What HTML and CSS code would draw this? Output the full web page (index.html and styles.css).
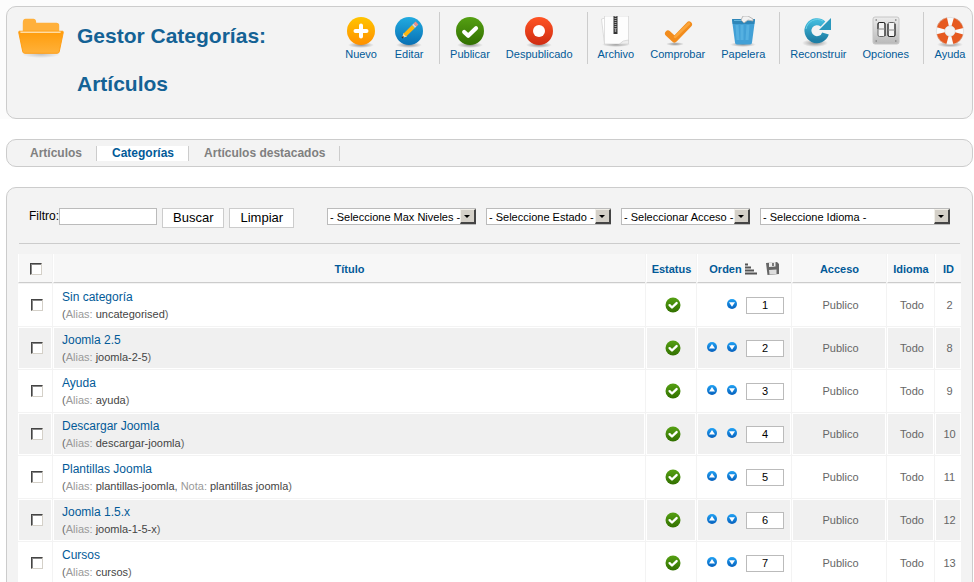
FILE: index.html
```
<!DOCTYPE html>
<html lang="es">

<head>
    <meta charset="UTF-8">
    <meta name="viewport" content="width=device-width, initial-scale=1.0">
    <title>Gestor Categorías: Artículos</title>
    <link rel="stylesheet" href="styles.css">
</head>

<body>

    <!-- shared icons and gradients -->
    <svg class="sprite" width="0" height="0" aria-hidden="true">
        <defs>
            <linearGradient id="gOrange" x1="0" y1="0" x2="0" y2="1">
                <stop offset="0" stop-color="#ffc400" />
                <stop offset="1" stop-color="#ff9000" />
            </linearGradient>
            <linearGradient id="gBlue" x1="0" y1="0" x2="0" y2="1">
                <stop offset="0" stop-color="#22abe0" />
                <stop offset="1" stop-color="#0870b4" />
            </linearGradient>
            <linearGradient id="gGreen" x1="0" y1="0" x2="0" y2="1">
                <stop offset="0" stop-color="#55a013" />
                <stop offset="1" stop-color="#327000" />
            </linearGradient>
            <linearGradient id="gRed" x1="0" y1="0" x2="0" y2="1">
                <stop offset="0" stop-color="#ff5424" />
                <stop offset="1" stop-color="#cf2c12" />
            </linearGradient>
            <linearGradient id="gFolder" x1="0" y1="0" x2="0" y2="1">
                <stop offset="0" stop-color="#ff9c0a" />
                <stop offset="1" stop-color="#ffb13a" />
            </linearGradient>
            <linearGradient id="gTeal" x1="0" y1="0" x2="0" y2="1">
                <stop offset="0" stop-color="#3fb8da" />
                <stop offset="1" stop-color="#1f7fa5" />
            </linearGradient>
            <linearGradient id="gMetal" x1="0" y1="0" x2="0" y2="1">
                <stop offset="0" stop-color="#ececec" />
                <stop offset="1" stop-color="#b9b9b9" />
            </linearGradient>
            <linearGradient id="gArrow" x1="0" y1="0" x2="0" y2="1">
                <stop offset="0" stop-color="#22a2f4" />
                <stop offset="1" stop-color="#0560bd" />
            </linearGradient>
            <radialGradient id="gShadow">
                <stop offset="0" stop-color="#000" stop-opacity=".4" />
                <stop offset="1" stop-color="#000" stop-opacity="0" />
            </radialGradient>
        </defs>
        <symbol id="tick" viewBox="0 0 16 16">
            <circle cx="8" cy="8" r="7.5" fill="url(#gGreen)" />
            <path d="M4.6 8.2l2.4 2.3 4.6-4.4" fill="none" stroke="#fff" stroke-width="2.4" stroke-linecap="round" stroke-linejoin="round" />
        </symbol>
        <symbol id="up" viewBox="0 0 10 10">
            <circle cx="5" cy="5" r="5" fill="url(#gArrow)" />
            <path d="M5 2L8 6.500H2z" fill="#fff" />
        </symbol>
        <symbol id="down" viewBox="0 0 10 10">
            <circle cx="5" cy="5" r="5" fill="url(#gArrow)" />
            <path d="M5 7.800L2 3.300h6z" fill="#fff" />
        </symbol>
    </svg>

    <div class="top">
        <header class="box header">
            <svg class="folder" width="46" height="46" viewBox="0 0 48 48" aria-hidden="true">
                <ellipse cx="24" cy="42" rx="20" ry="4" fill="url(#gShadow)" opacity=".5" />
                <path d="M5 20V9q0-4 3-4h8q3 0 3 4h21q3 0 3 3v8z" fill="#ffb03b" />
                <path d="M1.500 18h45q1 0 .7 1.500l-4.200 20q-.4 1.500-2 1.500H7q-1.600 0-2-1.500l-4.200-20Q.5 18 1.500 18z" fill="url(#gFolder)" stroke="#ff9c10" />
                <path d="M2.500 19h42" stroke="#ffdca2" stroke-width="1.500" />
            </svg>
            <h1>Gestor Categorías: Artículos</h1>
            <nav class="toolbar">
                <a href="#">
                    <svg viewBox="0 0 32 32">
                        <ellipse cx="16" cy="29" rx="13" ry="3" fill="url(#gShadow)" />
                        <circle cx="16" cy="15" r="14" fill="url(#gOrange)" />
                        <path d="M16 9.500v11M10.500 15h11" stroke="#fff" stroke-width="4" stroke-linecap="round" />
                    </svg>
                    Nuevo
                </a>
                <a href="#">
                    <svg viewBox="0 0 32 32">
                        <ellipse cx="16" cy="29" rx="13" ry="3" fill="url(#gShadow)" />
                        <circle cx="16" cy="15" r="14" fill="url(#gBlue)" />
                        <path d="M9 22l1.500-5 3.500 3.500z" fill="#f4d9a4" />
                        <path d="M11.800 19.200l8.700-8.700" stroke="#fbb60f" stroke-width="4" />
                        <path d="M20.500 10.500l1.500-1.500" stroke="#d5d5d5" stroke-width="4" />
                        <path d="M22 9l2-2" stroke="#ef8f86" stroke-width="4" />
                        <path d="M9 22l1.500-1.500" stroke="#333" stroke-width="1.500" />
                    </svg>
                    Editar
                </a>
                <span class="divider"></span>
                <a href="#">
                    <svg viewBox="0 0 32 32">
                        <ellipse cx="16" cy="29" rx="13" ry="3" fill="url(#gShadow)" />
                        <circle cx="16" cy="15" r="14" fill="url(#gGreen)" />
                        <path d="M10.200 16l4 3.800 7.800-7.600" fill="none" stroke="#fff" stroke-width="4.200" stroke-linecap="round" stroke-linejoin="round" />
                    </svg>
                    Publicar
                </a>
                <a href="#">
                    <svg viewBox="0 0 32 32">
                        <ellipse cx="16" cy="29" rx="13" ry="3" fill="url(#gShadow)" />
                        <circle cx="16" cy="15" r="14" fill="url(#gRed)" />
                        <circle cx="16" cy="15" r="6" fill="#fff" />
                    </svg>
                    Despublicado
                </a>
                <span class="divider"></span>
                <a href="#">
                    <svg viewBox="0 0 32 32">
                        <ellipse cx="16" cy="28.500" rx="14" ry="2.500" fill="url(#gShadow)" />
                        <path d="M1.500 3l4-1 3 25-4 1z" fill="#fff" stroke="#d0d0d0" stroke-width=".7" />
                        <path d="M4.500 0h24v25l-4 3h-20z" fill="#fdfdfd" stroke="#d3d3d3" stroke-width=".7" />
                        <path d="M28.500 24q-6 0-9 4h9z" fill="#eee" stroke="#d0d0d0" stroke-width=".7" />
                        <path d="M15.500 0v18" stroke="#333" stroke-width="4" />
                        <path d="M15.500 0v13" stroke="#aaa" stroke-width="2" stroke-dasharray="1 1" />
                        <path d="M15.500 12v4" stroke="#999" stroke-width="1.500" />
                    </svg>
                    Archivo
                </a>
                <a href="#">
                    <svg viewBox="0 0 32 32">
                        <ellipse cx="13" cy="28" rx="9" ry="2" fill="url(#gShadow)" />
                        <path d="M6 17.500l6.500 6L27 8.500" fill="none" stroke="#f28c1c" stroke-width="6" stroke-linecap="round" stroke-linejoin="round" />
                        <path d="M13 21L27 7.500" stroke="#fba53a" stroke-width="2.500" stroke-linecap="round" />
                    </svg>
                    Comprobar
                </a>
                <a href="#">
                    <svg viewBox="0 0 32 32">
                        <ellipse cx="16" cy="28.500" rx="13" ry="2.500" fill="url(#gShadow)" />
                        <path d="M5 4h23l-3 22.500q0 2-2 2H10q-2 0-2-2z" fill="#42a0d6" />
                        <path d="M10 9l1 15M15 9v15M21 9l-1 15" stroke="#55b0e0" stroke-width="3" />
                        <path d="M5 3h23l-.7 5H5.700z" fill="#2e86b8" />
                        <path d="M7 4.500h19" stroke="#65b7df" />
                        <path d="M14 4l2-4 5 0 5 3v2l-5-1-4 3z" fill="#f2f2f2" stroke="#aaa" stroke-width=".8" />
                    </svg>
                    Papelera
                </a>
                <span class="divider"></span>
                <a href="#">
                    <svg viewBox="0 0 32 32">
                        <ellipse cx="13" cy="27" rx="13" ry="4" fill="url(#gShadow)" />
                        <path d="M21 8A9 9 0 1 0 23.500 17.500" fill="none" stroke="url(#gTeal)" stroke-width="7" />
                        <path d="M29 2v12H17z" fill="#2b98bd" />
                        <path d="M4 13A11.500 11.500 0 0 1 21 5" fill="none" stroke="#6bd0e6" />
                    </svg>
                    Reconstruir
                </a>
                <a href="#">
                    <svg viewBox="0 0 32 32">
                        <rect x="3" y="1" width="26" height="27" rx="2" fill="url(#gMetal)" stroke="#c6c6c6" />
                        <path d="M5.500 4h1.500M25 4h1.500M5.500 25h1.500M25 25h1.500" stroke="#888" stroke-width="1.500" />
                        <rect x="8" y="6.500" width="7" height="14" rx="1.500" fill="#f4f4f4" stroke="#666" />
                        <rect x="18" y="6.500" width="7" height="14" rx="1.500" fill="#f4f4f4" stroke="#666" />
                        <path d="M8 13V8q0-1.500 1.500-1.500h4q1.500 0 1.500 1.500v12M25 8v11q0 1.500-1.500 1.500h-4q-1.500 0-1.500-1.500V8" fill="none" stroke="#222" />
                        <path d="M8 13h7M18 14h7" stroke="#888" />
                    </svg>
                    Opciones
                </a>
                <span class="divider"></span>
                <a href="#">
                    <svg viewBox="0 0 32 32">
                        <ellipse cx="16" cy="28.500" rx="13" ry="3" fill="url(#gShadow)" />
                        <circle cx="16" cy="15" r="9.500" fill="none" stroke="#fafafa" stroke-width="8.500" />
                        <circle cx="16" cy="15" r="9.500" fill="none" stroke="#e65a20" stroke-width="8.500" stroke-dasharray="10 4.923" stroke-dashoffset="-2.461" />
                        <circle cx="16" cy="15" r="13.700" fill="none" stroke="#ccc" stroke-width=".5" />
                        <circle cx="16" cy="15" r="5.200" fill="#f3f3f3" stroke="#ccc" stroke-width=".5" />
                    </svg>
                    Ayuda
                </a>
            </nav>
        </header>
    </div>

    <nav class="box submenu">
        <a href="#">Artículos</a>
        <a href="#" class="active">Categorías</a>
        <a href="#">Artículos destacados</a>
    </nav>

    <main class="box content">
        <form class="filters">
            <div class="filter-search">
                <label for="search">Filtro:</label>
                <input type="text" id="search">
                <button type="button">Buscar</button>
                <button type="button">Limpiar</button>
            </div>
            <div class="filter-select">
                <span class="select level"><select aria-label="Max Niveles"><option>- Seleccione Max Niveles -</option></select></span>
                <span class="select state"><select aria-label="Estado"><option>- Seleccione Estado -</option></select></span>
                <span class="select access"><select aria-label="Acceso"><option>- Seleccionar Acceso -</option></select></span>
                <span class="select language"><select aria-label="Idioma"><option>- Seleccione Idioma -</option></select></span>
            </div>
        </form>

        <table class="adminlist">
            <colgroup>
                <col class="col-check">
                <col>
                <col class="col-status">
                <col class="col-order">
                <col class="col-access">
                <col class="col-language">
                <col class="col-id">
            </colgroup>
            <thead>
                <tr>
                    <th><input type="checkbox" aria-label="Seleccionar todo"></th>
                    <th><a href="#">Título</a></th>
                    <th><a href="#">Estatus</a></th>
                    <th>
                        <div class="order-head">
                            <a href="#">Orden</a>
                            <svg width="12" height="12" viewBox="0 0 12 12">
                                <path d="M0 1.500h3M0 4.500h6M0 7.500h9M0 10.500h12" stroke="#555" stroke-width="2" />
                            </svg>
                            <svg class="save" width="15" height="15" viewBox="0 0 15 15">
                                <path d="M1 2l11-1 2 2v10L2.500 14z" fill="#666" />
                                <path d="M4 1.500l6.500-.5v4.500L4 6z" fill="#eee" />
                                <path d="M4 9l7.500-.5v4.500L4.500 13.500z" fill="#ddd" />
                                <path d="M8 2v3" stroke="#555" stroke-width="1.500" />
                            </svg>
                        </div>
                    </th>
                    <th><a href="#">Acceso</a></th>
                    <th><a href="#">Idioma</a></th>
                    <th><a href="#">ID</a></th>
                </tr>
            </thead>
            <tbody id="rows"></tbody>
        </table>
    </main>

    <script>
        let categories = [
            { title: "Sin categoría", alias: "uncategorised", id: 2 },
            { title: "Joomla 2.5", alias: "joomla-2-5", id: 8 },
            { title: "Ayuda", alias: "ayuda", id: 9 },
            { title: "Descargar Joomla", alias: "descargar-joomla", id: 10 },
            { title: "Plantillas Joomla", alias: "plantillas-joomla", note: "plantillas joomla", id: 11 },
            { title: "Joomla 1.5.x", alias: "joomla-1-5-x", id: 12 },
            { title: "Cursos", alias: "cursos", id: 13 }
        ];

        function arrow(name, label) {
            return `<a href="#" aria-label="${label}"><svg width="10" height="10"><use href="#${name}" /></svg></a>`;
        }

        let tbody = document.getElementById("rows");
        categories.forEach((cat, i) => {
            let row = tbody.insertRow();
            let note = cat.note ? `, <span>Nota:</span> <b>${cat.note}</b>` : "";
            row.innerHTML = `
                <td><input type="checkbox" aria-label="${cat.title}"></td>
                <td class="title">
                    <a href="#">${cat.title}</a>
                    <p>(<span>Alias:</span> <b>${cat.alias}</b>${note})</p>
                </td>
                <td><svg class="status" width="16" height="16"><use href="#tick" /></svg></td>
                <td>
                    <div class="order">
                        ${i > 0 ? arrow("up", "Subir") : ""}
                        ${arrow("down", "Bajar")}
                        <input type="text" value="${i + 1}" aria-label="Orden de ${cat.title}">
                    </div>
                </td>
                <td>Publico</td>
                <td>Todo</td>
                <td>${cat.id}</td>
            `;
        });
    </script>

</body>

</html>
```

FILE: styles.css
```
*,
*::before,
*::after {
    box-sizing: border-box;
}

body {
    margin: 0;
    height: 100vh;
    overflow: hidden;
    background: #fff;
    color: #000;
    font-family: "Liberation Sans", Arial, sans-serif;
    font-size: 11px;
}

a {
    color: #025a98;
    text-decoration: none;
}

.sprite {
    position: absolute;
}

.box {
    margin: 0 1px 0 6px;
    background: #f3f3f3;
    border: 1px solid #ccc;
    border-radius: 10px;
}

/* header */
.top {
    padding-top: 6px;
    background: #fcfcfc;
}

.header {
    display: flex;
    align-items: flex-start;
    padding: 5px 6px 10px 11px;
}

.folder {
    flex: none;
    margin: 2px 13px 0 0;
}

h1 {
    flex: 1;
    margin: 0;
    color: #146295;
    font-size: 21px;
    line-height: 48px;
}

.toolbar {
    display: flex;
    gap: 16px;
}

.toolbar a {
    display: flex;
    flex-direction: column;
    align-items: center;
    padding-top: 4px;
    line-height: 13px;
}

.toolbar svg {
    width: 32px;
    height: 32px;
}

.divider {
    width: 1px;
    height: 52px;
    margin: 0 -6px 0 -2px;
    background: #ccc;
}

/* tabs */
.submenu {
    display: flex;
    margin-top: 20px;
    padding: 6px 8px 5px;
    font-size: 12px;
    font-weight: bold;
    line-height: 15px;
}

.submenu a {
    padding: 0 14px 0 15px;
    border-right: 1px solid #ccc;
    color: #808080;
}

.submenu .active {
    background: #fff;
    color: #025a98;
}

/* filters */
.content {
    margin-top: 20px;
    padding: 20px 10px;
}

.filters {
    display: flex;
    justify-content: space-between;
    align-items: flex-start;
    height: 36px;
    margin: 0 2px 9px;
    padding: 0 10px;
    border-bottom: 1px solid #ccc;
}

.filter-search,
.filter-select {
    display: flex;
    align-items: flex-start;
}

.filter-select {
    gap: 10px;
}

.filters label {
    font-size: 12px;
    line-height: 16px;
}

.filters input {
    width: 98px;
    height: 17px;
    margin-right: 5px;
    padding: 0 2px;
    border: 1px solid #bbb;
}

.filters button {
    height: 20px;
    margin-right: 5px;
    padding: 0 10px;
    background: #fff;
    border: 1px solid #ccc;
    color: #000;
    font-family: inherit;
    font-size: 13px;
    line-height: 18px;
}

.select {
    position: relative;
}

.select select {
    display: block;
    width: 100%;
    height: 17px;
    padding: 0 15px 0 2px;
    appearance: none;
    background: #fff;
    border: 1px solid #bbb;
    border-radius: 0;
    color: #000;
    font-family: inherit;
    font-size: 11px;
}

/* button part of the drop-down */
.select::before {
    content: "";
    position: absolute;
    top: 1px;
    right: 0;
    width: 16px;
    height: 15px;
    background: #d4d0c8;
    border: 1px solid #f1efe9;
    border-right: 2px solid #444;
    border-bottom: 2px solid #444;
    pointer-events: none;
}

.select::after {
    content: "";
    position: absolute;
    top: 7px;
    right: 6px;
    border: 3px solid transparent;
    border-top-color: #000;
    border-bottom: 0;
    pointer-events: none;
}

.level {
    width: 149px;
}

.state {
    width: 125px;
}

.access {
    width: 129px;
}

.language {
    width: 190px;
}

/* category list */
.adminlist {
    width: 100%;
    table-layout: fixed;
    border-spacing: 1px;
    color: #666;
}

.col-check {
    width: 34px;
}

.col-status {
    width: 50px;
}

.col-order,
.col-access {
    width: 94px;
}

.col-language {
    width: 47px;
}

.col-id {
    width: 26px;
}

.adminlist th {
    height: 29px;
    padding: 1px 0 0;
    background: #f7f7f7;
    border-left: 1px solid #fff;
    border-bottom: 1px solid #ccc;
}

.adminlist td {
    height: 42px;
    padding: 0 1px 0 4px;
    background: #fff;
    border: 1px solid #fff;
    text-align: center;
}

.adminlist tr:nth-child(even) td {
    background: #f0f0f0;
}

.adminlist td.title {
    padding-left: 8px;
    text-align: left;
}

.title a {
    font-size: 12px;
    line-height: 16px;
}

.title p {
    margin: 1px 0 0;
    line-height: 16px;
}

.title span {
    color: #999;
}

.title b {
    color: #444;
    font-weight: normal;
}

.status {
    display: block;
    margin: 0 auto;
}

input[type="checkbox"] {
    display: block;
    width: 12px;
    height: 12px;
    margin: 0 auto;
    appearance: none;
    background: #fff;
    border: 1px solid #d4d0c8;
    border-top: 1px solid #444;
    border-left: 1px solid #444;
    box-shadow: inset 1px 1px 0 #888;
}

.order-head {
    display: flex;
    align-items: center;
    justify-content: center;
    gap: 3px;
}

.save {
    margin-left: 5px;
}

.order {
    display: flex;
    justify-content: flex-end;
    gap: 10px;
    padding-right: 5px;
}

.order a {
    height: 10px;
    margin-top: 2px;
}

.order svg {
    display: block;
}

.order input {
    width: 38px;
    height: 17px;
    margin-left: -1px;
    padding: 0;
    border: 1px solid #bbb;
    color: #000;
    font-family: inherit;
    font-size: 11px;
    text-align: center;
}
```
